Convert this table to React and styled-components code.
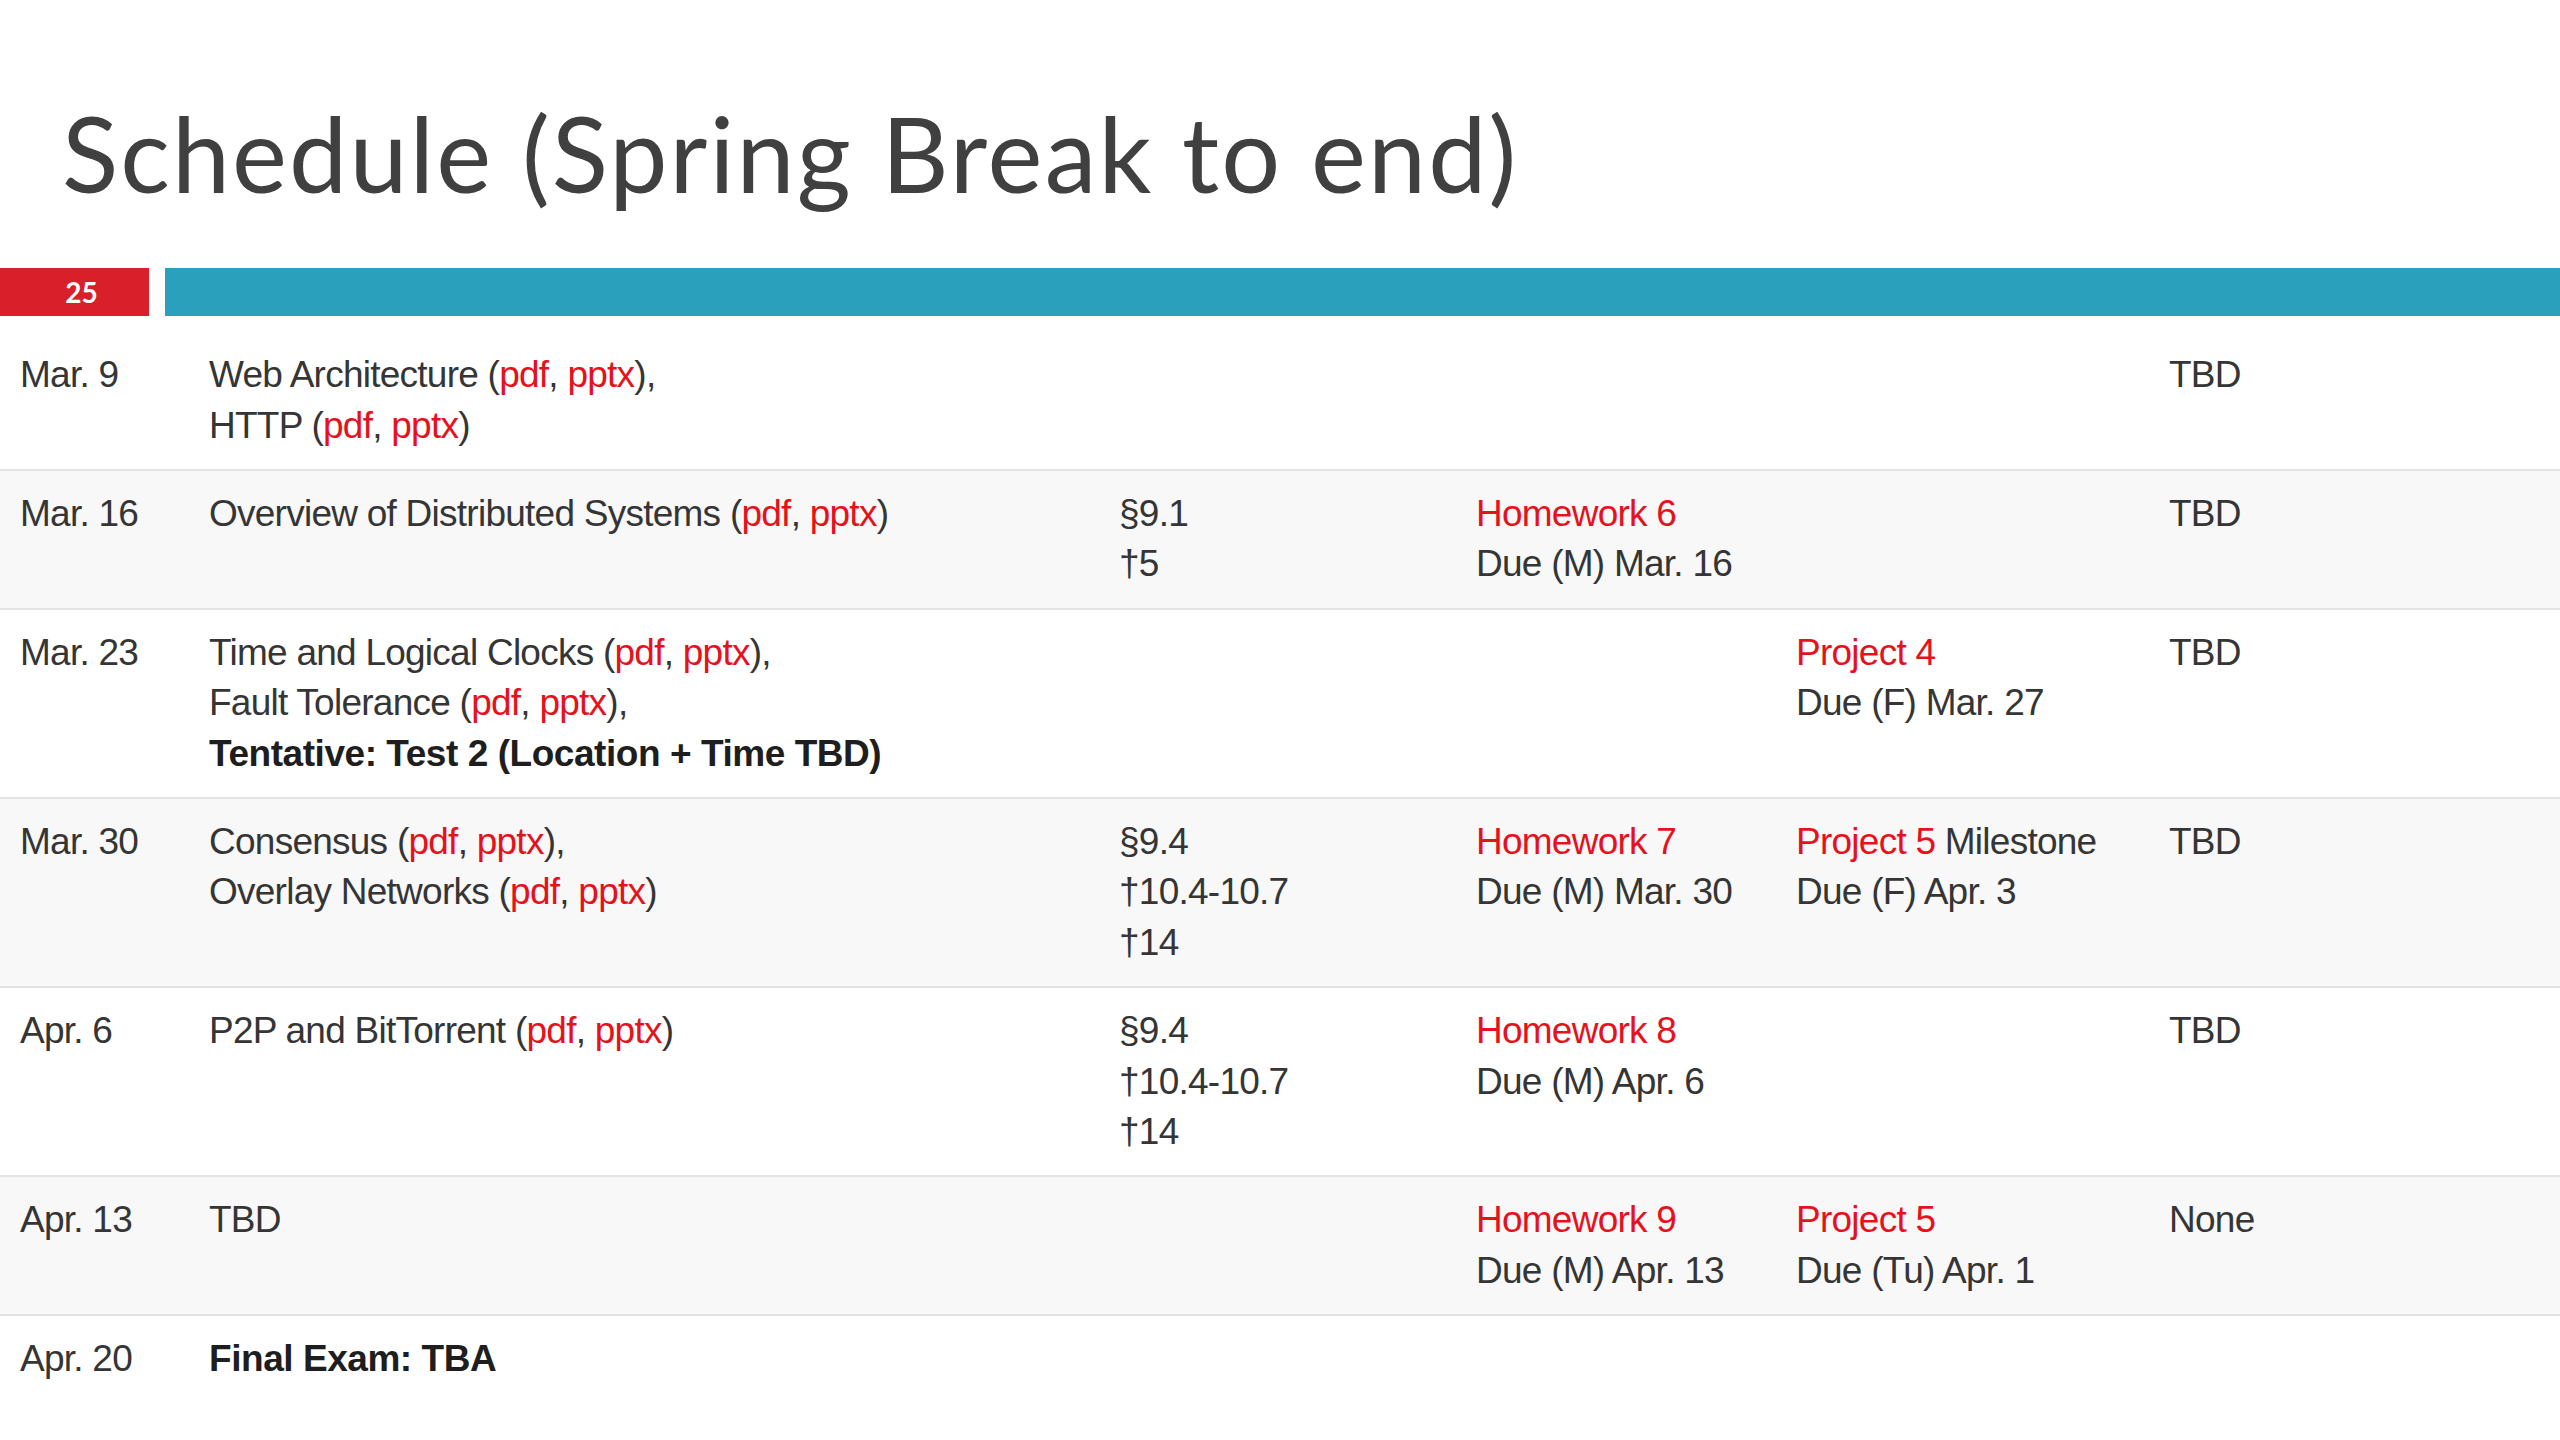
import React from "react";
import styled, { createGlobalStyle } from "styled-components";

const Global = createGlobalStyle`
  html, body { margin: 0; padding: 0; background: #ffffff; }
  body { width: 2560px; height: 1440px; overflow: hidden; }
`;

const Slide = styled.div`
  width: 2560px;
  height: 1440px;
  background: #fff;
  display: flex;
  flex-direction: column;
`;

const Title = styled.h1`
  margin: 0;
  padding: 88px 0 0 62px;
  height: 180px;
  box-sizing: border-box;
  font-family: Lato, "Open Sans", sans-serif;
  font-weight: 400;
  font-size: 104px;
  line-height: 130px;
  letter-spacing: 2.1px;
  color: #404040;
  white-space: nowrap;
`;

const Bar = styled.div`
  margin-top: 88px;
  display: flex;
  gap: 16px;
  height: 48px;
`;

const PageNum = styled.div`
  width: 149px;
  background: #d81f2a;
  color: #fff;
  font-family: Lato, sans-serif;
  font-weight: 700;
  font-size: 28px;
  display: flex;
  align-items: center;
  justify-content: center;
  padding-left: 14px;
  box-sizing: border-box;
`;

const Stripe = styled.div`
  flex: 1;
  background: #2aa0bd;
`;

const Table = styled.div`
  margin-top: 16px;
  display: flex;
  flex-direction: column;
  font-family: "Liberation Sans", Arial, sans-serif;
  font-size: 37px;
  letter-spacing: -0.75px;
  line-height: 50.5px;
  color: #353535;
`;

const Row = styled.div`
  display: grid;
  grid-template-columns: 189px 910px 357px 320px 373px 1fr;
  padding: 18px 0 17.8px 20px;
  background: ${(p) => (p.$shade ? "#f8f8f8" : "#fff")};
  border-top: ${(p) => (p.$first ? "none" : "2px solid #e3e3e3")};
`;

const Cell = styled.div`
  display: flex;
  flex-direction: column;
  white-space: nowrap;
`;

const Line = styled.div`
  font-weight: ${(p) => (p.$bold ? 700 : 400)};
  letter-spacing: ${(p) => (p.$bold ? "-0.45px" : "inherit")};
  color: ${(p) => (p.$bold ? "#1e1e1e" : "inherit")};
`;

const Red = styled.span`
  color: #e5121c;
`;

const Links = () => (
  <>
    (<Red>pdf</Red>, <Red>pptx</Red>)
  </>
);

const rows = [
  {
    date: "Mar. 9",
    topic: [
      <>Web Architecture <Links />,</>,
      <>HTTP <Links /></>,
    ],
    reading: [],
    hw: [],
    proj: [],
    other: "TBD",
  },
  {
    date: "Mar. 16",
    topic: [<>Overview of Distributed Systems <Links /></>],
    reading: ["§9.1", "†5"],
    hw: [<Red>Homework 6</Red>, "Due (M) Mar. 16"],
    proj: [],
    other: "TBD",
  },
  {
    date: "Mar. 23",
    topic: [
      <>Time and Logical Clocks <Links />,</>,
      <>Fault Tolerance <Links />,</>,
      { bold: "Tentative: Test 2 (Location + Time TBD)" },
    ],
    reading: [],
    hw: [],
    proj: [<Red>Project 4</Red>, "Due (F) Mar. 27"],
    other: "TBD",
  },
  {
    date: "Mar. 30",
    topic: [
      <>Consensus <Links />,</>,
      <>Overlay Networks <Links /></>,
    ],
    reading: ["§9.4", "†10.4-10.7", "†14"],
    hw: [<Red>Homework 7</Red>, "Due (M) Mar. 30"],
    proj: [<><Red>Project 5</Red> Milestone</>, "Due (F) Apr. 3"],
    other: "TBD",
  },
  {
    date: "Apr. 6",
    topic: [<>P2P and BitTorrent <Links /></>],
    reading: ["§9.4", "†10.4-10.7", "†14"],
    hw: [<Red>Homework 8</Red>, "Due (M) Apr. 6"],
    proj: [],
    other: "TBD",
  },
  {
    date: "Apr. 13",
    topic: ["TBD"],
    reading: [],
    hw: [<Red>Homework 9</Red>, "Due (M) Apr. 13"],
    proj: [<Red>Project 5</Red>, "Due (Tu) Apr. 1"],
    other: "None",
  },
  {
    date: "Apr. 20",
    topic: [{ bold: "Final Exam: TBA" }],
    reading: [],
    hw: [],
    proj: [],
    other: "",
  },
];

const renderLines = (items) =>
  items.map((it, i) =>
    it && typeof it === "object" && "bold" in it ? (
      <Line key={i} $bold>
        {it.bold}
      </Line>
    ) : (
      <Line key={i}>{it}</Line>
    )
  );

export default function App() {
  return (
    <Slide>
      <Global />
      <Title>Schedule (Spring Break to end)</Title>
      <Bar>
        <PageNum>25</PageNum>
        <Stripe />
      </Bar>
      <Table>
        {rows.map((r, i) => (
          <Row key={i} $shade={i % 2 === 1} $first={i === 0}>
            <Cell>{renderLines([r.date])}</Cell>
            <Cell>{renderLines(r.topic)}</Cell>
            <Cell>{renderLines(r.reading)}</Cell>
            <Cell>{renderLines(r.hw)}</Cell>
            <Cell>{renderLines(r.proj)}</Cell>
            <Cell>{r.other ? renderLines([r.other]) : null}</Cell>
          </Row>
        ))}
      </Table>
    </Slide>
  );
}
